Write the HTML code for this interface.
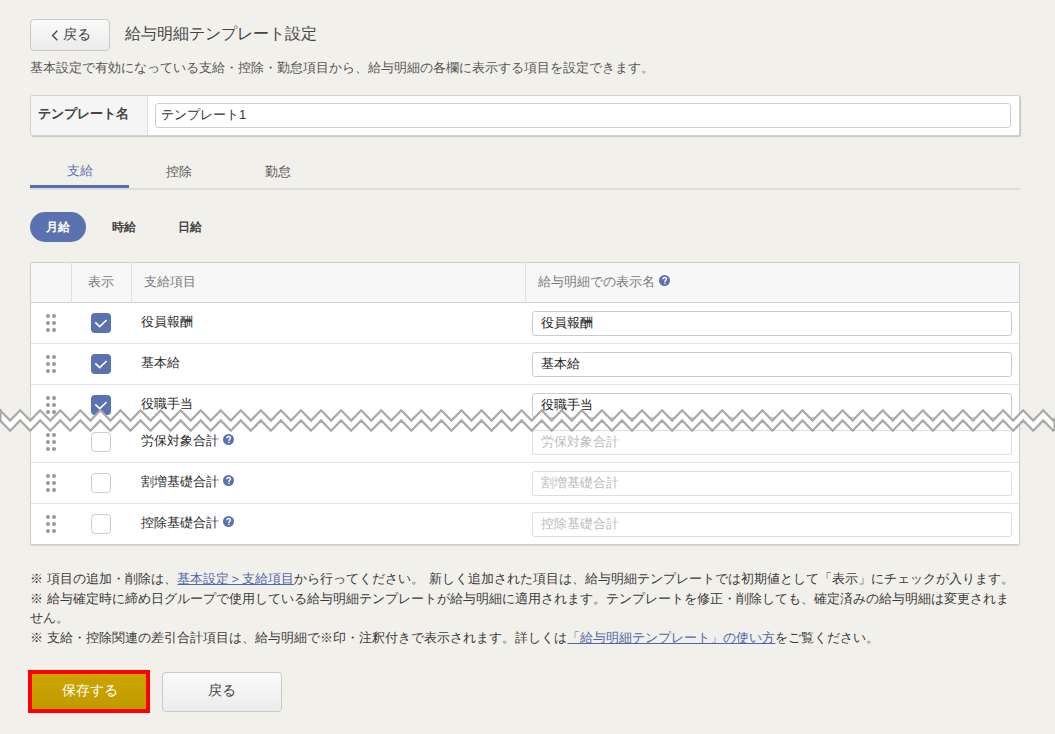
<!DOCTYPE html>
<html lang="ja">
<head>
<meta charset="utf-8">
<style>
*{box-sizing:border-box;margin:0;padding:0}
html,body{width:1055px;height:734px;overflow:hidden}
body{background:#f2f0eb;font-family:"Liberation Sans",sans-serif;color:#444;position:relative}
.a{position:absolute;white-space:nowrap}
.btn{position:absolute;border:1px solid #c9c9c9;border-radius:4px;background:linear-gradient(#fafafa,#ececec);color:#444;text-align:center}
.t13{font-size:13px;line-height:20px}
.tab{position:absolute;top:160px;width:99px;height:25px;text-align:center;font-size:13px;line-height:20px;color:#5a5a5a}
.pill{position:absolute;top:212px;width:56px;height:30px;border-radius:15px;text-align:center;font-size:12px;font-weight:bold;line-height:30px;color:#444}
.tbl{position:absolute;left:30px;top:262px;width:990px;height:283px;background:#fff;border:1px solid #cfcfcf;border-radius:2px;box-shadow:0 1px 1px rgba(0,0,0,.12);overflow:hidden}
.hdr{position:absolute;left:0;top:0;width:988px;height:40px;background:#f7f7f7;border-bottom:1px solid #d0d0d0}
.vl{position:absolute;top:0;width:1px;height:40px;background:#e0e0e0}
.hl{position:absolute;left:0;width:988px;height:1px;background:#e3e3e3}
.dots{position:absolute;left:15px;width:10px;height:18px}
.cb{position:absolute;left:60px;width:20px;height:20px;border-radius:4px}
.cb.on{background:#5a72b0}
.cb.off{background:#fff;border:1px solid #cdcdcd}
.itm{position:absolute;left:110px;font-size:13px;line-height:18px;color:#2a2a2a}
.inp{position:absolute;left:501px;width:480px;height:25px;border:1px solid #cbcbcb;border-radius:3px;background:#fff;font-size:13px;line-height:21px;padding-left:8px;color:#222}
.inp.ph{color:#bbb;border-color:#dedede}
.q{display:inline-block;width:11px;height:11px;vertical-align:0px;margin-left:4px}
.note{position:absolute;left:30px;font-size:13px;line-height:19.5px;color:#3a3a3a;white-space:nowrap;word-spacing:0.8px}
.lnk{color:#4d68a8;text-decoration:underline}
</style>
</head>
<body>

<!-- back button -->
<div class="btn" style="left:30px;top:19px;width:80px;height:32px;font-size:14px;line-height:30px">
  <svg width="8" height="12" viewBox="0 0 8 12" style="position:absolute;left:20px;top:10px"><path d="M6.3 0.8 L1.6 5.5 L6.3 10.2" fill="none" stroke="#444" stroke-width="1.35"/></svg>
  <span class="a" style="left:32px;top:-1px">戻る</span>
</div>
<div class="a" style="left:125px;top:24px;font-size:16px;line-height:20px;color:#444">給与明細テンプレート設定</div>
<div class="a t13" style="left:30px;top:58px;color:#555">基本設定で有効になっている支給・控除・勤怠項目から、給与明細の各欄に表示する項目を設定できます。</div>

<!-- template name box -->
<div class="a" style="left:30px;top:95px;width:990px;height:41px;background:#fff;border:1px solid #d2d2d2;border-radius:2px;overflow:hidden;box-shadow:1px 1px 1px rgba(0,0,0,.18)">
  <div class="a" style="left:0;top:0;width:117px;height:39px;background:#f5f5f5;border-right:1px solid #dedede"></div>
  <div class="a t13" style="left:7px;top:8px;font-weight:bold;color:#444">テンプレート名</div>
  <div class="a" style="left:124px;top:7px;width:856px;height:25px;border:1px solid #cdcdcd;border-radius:3px;background:#fff;font-size:13px;line-height:21px;padding-left:5px;color:#333">テンプレート1</div>
</div>

<!-- tabs -->
<div class="tab" style="left:30px;top:160.5px;color:#5a72b0">支給</div>
<div class="tab" style="left:129px;top:161.5px">控除</div>
<div class="tab" style="left:228px;top:161.5px">勤怠</div>
<div class="a" style="left:30px;top:188px;width:990px;height:2px;background:#dcdcdc"></div>
<div class="a" style="left:30px;top:185px;width:99px;height:3px;background:#5570ad"></div>

<!-- pills -->
<div class="pill" style="left:30px;background:#5a72b0;color:#fff">月給</div>
<div class="pill" style="left:96px">時給</div>
<div class="pill" style="left:162px">日給</div>

<!-- table -->
<div class="tbl">
  <div class="hdr">
    <div class="vl" style="left:40px"></div>
    <div class="vl" style="left:100px"></div>
    <div class="vl" style="left:494px"></div>
    <div class="a t13" style="left:57px;top:9px;color:#7a7a7a">表示</div>
    <div class="a t13" style="left:113px;top:9px;color:#7a7a7a">支給項目</div>
    <div class="a t13" style="left:507px;top:9px;color:#7a7a7a">給与明細での表示名<span class="q"><svg width="11" height="11" viewBox="0 0 11 11"><circle cx="5.5" cy="5.5" r="5.5" fill="#5a72b0"/><path d="M3.8 4.3 C3.8 3 4.6 2.5 5.6 2.5 C6.7 2.5 7.5 3.1 7.5 4 C7.5 5.1 6.1 5.3 5.9 6.3 L5.9 6.9" fill="none" stroke="#fff" stroke-width="1.3"/><rect x="5.2" y="7.8" width="1.4" height="1.2" fill="#fff"/></svg></span></div>
  </div>
    <svg class="dots" style="top:51px" width="10" height="18" viewBox="0 0 10 18"><g fill="#999"><circle cx="2" cy="2" r="2"/><circle cx="8" cy="2" r="2"/><circle cx="2" cy="9" r="2"/><circle cx="8" cy="9" r="2"/><circle cx="2" cy="16" r="2"/><circle cx="8" cy="16" r="2"/></g></svg>
  <div class="cb on" style="top:50px"><svg width="20" height="20" viewBox="0 0 20 20" style="position:absolute;left:0;top:0"><path d="M4.3 9.3 L8.7 13.5 L15.6 7" fill="none" stroke="#fff" stroke-width="1.7"/></svg></div>
  <div class="itm" style="top:50px">役員報酬</div>
  <div class="inp" style="top:48px">役員報酬</div>
  <div class="hl" style="top:80px"></div>
  <svg class="dots" style="top:92px" width="10" height="18" viewBox="0 0 10 18"><g fill="#999"><circle cx="2" cy="2" r="2"/><circle cx="8" cy="2" r="2"/><circle cx="2" cy="9" r="2"/><circle cx="8" cy="9" r="2"/><circle cx="2" cy="16" r="2"/><circle cx="8" cy="16" r="2"/></g></svg>
  <div class="cb on" style="top:91px"><svg width="20" height="20" viewBox="0 0 20 20" style="position:absolute;left:0;top:0"><path d="M4.3 9.3 L8.7 13.5 L15.6 7" fill="none" stroke="#fff" stroke-width="1.7"/></svg></div>
  <div class="itm" style="top:91px">基本給</div>
  <div class="inp" style="top:89px">基本給</div>
  <div class="hl" style="top:121px"></div>
  <svg class="dots" style="top:133px" width="10" height="18" viewBox="0 0 10 18"><g fill="#999"><circle cx="2" cy="2" r="2"/><circle cx="8" cy="2" r="2"/><circle cx="2" cy="9" r="2"/><circle cx="8" cy="9" r="2"/><circle cx="2" cy="16" r="2"/><circle cx="8" cy="16" r="2"/></g></svg>
  <div class="cb on" style="top:132px"><svg width="20" height="20" viewBox="0 0 20 20" style="position:absolute;left:0;top:0"><path d="M4.3 9.3 L8.7 13.5 L15.6 7" fill="none" stroke="#fff" stroke-width="1.7"/></svg></div>
  <div class="itm" style="top:132px">役職手当</div>
  <div class="inp" style="top:130px">役職手当</div>
  
  <svg class="dots" style="top:170px" width="10" height="18" viewBox="0 0 10 18"><g fill="#999"><circle cx="2" cy="2" r="2"/><circle cx="8" cy="2" r="2"/><circle cx="2" cy="9" r="2"/><circle cx="8" cy="9" r="2"/><circle cx="2" cy="16" r="2"/><circle cx="8" cy="16" r="2"/></g></svg>
  <div class="cb off" style="top:169px"></div>
  <div class="itm" style="top:169px">労保対象合計<span class="q"><svg width="11" height="11" viewBox="0 0 11 11"><circle cx="5.5" cy="5.5" r="5.5" fill="#5a72b0"/><path d="M3.8 4.3 C3.8 3 4.6 2.5 5.6 2.5 C6.7 2.5 7.5 3.1 7.5 4 C7.5 5.1 6.1 5.3 5.9 6.3 L5.9 6.9" fill="none" stroke="#fff" stroke-width="1.3"/><rect x="5.2" y="7.8" width="1.4" height="1.2" fill="#fff"/></svg></span></div>
  <div class="inp ph" style="top:167px">労保対象合計</div>
  <div class="hl" style="top:199px"></div>
  <svg class="dots" style="top:211px" width="10" height="18" viewBox="0 0 10 18"><g fill="#999"><circle cx="2" cy="2" r="2"/><circle cx="8" cy="2" r="2"/><circle cx="2" cy="9" r="2"/><circle cx="8" cy="9" r="2"/><circle cx="2" cy="16" r="2"/><circle cx="8" cy="16" r="2"/></g></svg>
  <div class="cb off" style="top:210px"></div>
  <div class="itm" style="top:210px">割増基礎合計<span class="q"><svg width="11" height="11" viewBox="0 0 11 11"><circle cx="5.5" cy="5.5" r="5.5" fill="#5a72b0"/><path d="M3.8 4.3 C3.8 3 4.6 2.5 5.6 2.5 C6.7 2.5 7.5 3.1 7.5 4 C7.5 5.1 6.1 5.3 5.9 6.3 L5.9 6.9" fill="none" stroke="#fff" stroke-width="1.3"/><rect x="5.2" y="7.8" width="1.4" height="1.2" fill="#fff"/></svg></span></div>
  <div class="inp ph" style="top:208px">割増基礎合計</div>
  <div class="hl" style="top:240px"></div>
  <svg class="dots" style="top:252px" width="10" height="18" viewBox="0 0 10 18"><g fill="#999"><circle cx="2" cy="2" r="2"/><circle cx="8" cy="2" r="2"/><circle cx="2" cy="9" r="2"/><circle cx="8" cy="9" r="2"/><circle cx="2" cy="16" r="2"/><circle cx="8" cy="16" r="2"/></g></svg>
  <div class="cb off" style="top:251px"></div>
  <div class="itm" style="top:251px">控除基礎合計<span class="q"><svg width="11" height="11" viewBox="0 0 11 11"><circle cx="5.5" cy="5.5" r="5.5" fill="#5a72b0"/><path d="M3.8 4.3 C3.8 3 4.6 2.5 5.6 2.5 C6.7 2.5 7.5 3.1 7.5 4 C7.5 5.1 6.1 5.3 5.9 6.3 L5.9 6.9" fill="none" stroke="#fff" stroke-width="1.3"/><rect x="5.2" y="7.8" width="1.4" height="1.2" fill="#fff"/></svg></span></div>
  <div class="inp ph" style="top:249px">控除基礎合計</div>
</div>

<!-- zigzag -->
<svg class="a" style="left:0;top:0" width="1055" height="734" viewBox="0 0 1055 734">
  <polygon points="-19.96,410.30 -9.93,420.50 0.10,410.30 10.13,420.50 20.16,410.30 30.19,420.50 40.22,410.30 50.25,420.50 60.28,410.30 70.31,420.50 80.34,410.30 90.37,420.50 100.40,410.30 110.43,420.50 120.46,410.30 130.49,420.50 140.52,410.30 150.55,420.50 160.58,410.30 170.61,420.50 180.64,410.30 190.67,420.50 200.70,410.30 210.73,420.50 220.76,410.30 230.79,420.50 240.82,410.30 250.85,420.50 260.88,410.30 270.91,420.50 280.94,410.30 290.97,420.50 301.00,410.30 311.03,420.50 321.06,410.30 331.09,420.50 341.12,410.30 351.15,420.50 361.18,410.30 371.21,420.50 381.24,410.30 391.27,420.50 401.30,410.30 411.33,420.50 421.36,410.30 431.39,420.50 441.42,410.30 451.45,420.50 461.48,410.30 471.51,420.50 481.54,410.30 491.57,420.50 501.60,410.30 511.63,420.50 521.66,410.30 531.69,420.50 541.72,410.30 551.75,420.50 561.78,410.30 571.81,420.50 581.84,410.30 591.87,420.50 601.90,410.30 611.93,420.50 621.96,410.30 631.99,420.50 642.02,410.30 652.05,420.50 662.08,410.30 672.11,420.50 682.14,410.30 692.17,420.50 702.20,410.30 712.23,420.50 722.26,410.30 732.29,420.50 742.32,410.30 752.35,420.50 762.38,410.30 772.41,420.50 782.44,410.30 792.47,420.50 802.50,410.30 812.53,420.50 822.56,410.30 832.59,420.50 842.62,410.30 852.65,420.50 862.68,410.30 872.71,420.50 882.74,410.30 892.77,420.50 902.80,410.30 912.83,420.50 922.86,410.30 932.89,420.50 942.92,410.30 952.95,420.50 962.98,410.30 973.01,420.50 983.04,410.30 993.07,420.50 1003.10,410.30 1013.13,420.50 1023.16,410.30 1033.19,420.50 1043.22,410.30 1053.25,420.50 1063.28,410.30 1073.31,420.50 1073.31,430.70 1063.28,420.50 1053.25,430.70 1043.22,420.50 1033.19,430.70 1023.16,420.50 1013.13,430.70 1003.10,420.50 993.07,430.70 983.04,420.50 973.01,430.70 962.98,420.50 952.95,430.70 942.92,420.50 932.89,430.70 922.86,420.50 912.83,430.70 902.80,420.50 892.77,430.70 882.74,420.50 872.71,430.70 862.68,420.50 852.65,430.70 842.62,420.50 832.59,430.70 822.56,420.50 812.53,430.70 802.50,420.50 792.47,430.70 782.44,420.50 772.41,430.70 762.38,420.50 752.35,430.70 742.32,420.50 732.29,430.70 722.26,420.50 712.23,430.70 702.20,420.50 692.17,430.70 682.14,420.50 672.11,430.70 662.08,420.50 652.05,430.70 642.02,420.50 631.99,430.70 621.96,420.50 611.93,430.70 601.90,420.50 591.87,430.70 581.84,420.50 571.81,430.70 561.78,420.50 551.75,430.70 541.72,420.50 531.69,430.70 521.66,420.50 511.63,430.70 501.60,420.50 491.57,430.70 481.54,420.50 471.51,430.70 461.48,420.50 451.45,430.70 441.42,420.50 431.39,430.70 421.36,420.50 411.33,430.70 401.30,420.50 391.27,430.70 381.24,420.50 371.21,430.70 361.18,420.50 351.15,430.70 341.12,420.50 331.09,430.70 321.06,420.50 311.03,430.70 301.00,420.50 290.97,430.70 280.94,420.50 270.91,430.70 260.88,420.50 250.85,430.70 240.82,420.50 230.79,430.70 220.76,420.50 210.73,430.70 200.70,420.50 190.67,430.70 180.64,420.50 170.61,430.70 160.58,420.50 150.55,430.70 140.52,420.50 130.49,430.70 120.46,420.50 110.43,430.70 100.40,420.50 90.37,430.70 80.34,420.50 70.31,430.70 60.28,420.50 50.25,430.70 40.22,420.50 30.19,430.70 20.16,420.50 10.13,430.70 0.10,420.50 -9.93,430.70 -19.96,420.50" fill="#fff"/>
  <polyline points="-19.96,410.30 -9.93,420.50 0.10,410.30 10.13,420.50 20.16,410.30 30.19,420.50 40.22,410.30 50.25,420.50 60.28,410.30 70.31,420.50 80.34,410.30 90.37,420.50 100.40,410.30 110.43,420.50 120.46,410.30 130.49,420.50 140.52,410.30 150.55,420.50 160.58,410.30 170.61,420.50 180.64,410.30 190.67,420.50 200.70,410.30 210.73,420.50 220.76,410.30 230.79,420.50 240.82,410.30 250.85,420.50 260.88,410.30 270.91,420.50 280.94,410.30 290.97,420.50 301.00,410.30 311.03,420.50 321.06,410.30 331.09,420.50 341.12,410.30 351.15,420.50 361.18,410.30 371.21,420.50 381.24,410.30 391.27,420.50 401.30,410.30 411.33,420.50 421.36,410.30 431.39,420.50 441.42,410.30 451.45,420.50 461.48,410.30 471.51,420.50 481.54,410.30 491.57,420.50 501.60,410.30 511.63,420.50 521.66,410.30 531.69,420.50 541.72,410.30 551.75,420.50 561.78,410.30 571.81,420.50 581.84,410.30 591.87,420.50 601.90,410.30 611.93,420.50 621.96,410.30 631.99,420.50 642.02,410.30 652.05,420.50 662.08,410.30 672.11,420.50 682.14,410.30 692.17,420.50 702.20,410.30 712.23,420.50 722.26,410.30 732.29,420.50 742.32,410.30 752.35,420.50 762.38,410.30 772.41,420.50 782.44,410.30 792.47,420.50 802.50,410.30 812.53,420.50 822.56,410.30 832.59,420.50 842.62,410.30 852.65,420.50 862.68,410.30 872.71,420.50 882.74,410.30 892.77,420.50 902.80,410.30 912.83,420.50 922.86,410.30 932.89,420.50 942.92,410.30 952.95,420.50 962.98,410.30 973.01,420.50 983.04,410.30 993.07,420.50 1003.10,410.30 1013.13,420.50 1023.16,410.30 1033.19,420.50 1043.22,410.30 1053.25,420.50 1063.28,410.30 1073.31,420.50" fill="none" stroke="#a9a9a9" stroke-width="2.3" stroke-linejoin="miter"/>
  <polyline points="-19.96,420.50 -9.93,430.70 0.10,420.50 10.13,430.70 20.16,420.50 30.19,430.70 40.22,420.50 50.25,430.70 60.28,420.50 70.31,430.70 80.34,420.50 90.37,430.70 100.40,420.50 110.43,430.70 120.46,420.50 130.49,430.70 140.52,420.50 150.55,430.70 160.58,420.50 170.61,430.70 180.64,420.50 190.67,430.70 200.70,420.50 210.73,430.70 220.76,420.50 230.79,430.70 240.82,420.50 250.85,430.70 260.88,420.50 270.91,430.70 280.94,420.50 290.97,430.70 301.00,420.50 311.03,430.70 321.06,420.50 331.09,430.70 341.12,420.50 351.15,430.70 361.18,420.50 371.21,430.70 381.24,420.50 391.27,430.70 401.30,420.50 411.33,430.70 421.36,420.50 431.39,430.70 441.42,420.50 451.45,430.70 461.48,420.50 471.51,430.70 481.54,420.50 491.57,430.70 501.60,420.50 511.63,430.70 521.66,420.50 531.69,430.70 541.72,420.50 551.75,430.70 561.78,420.50 571.81,430.70 581.84,420.50 591.87,430.70 601.90,420.50 611.93,430.70 621.96,420.50 631.99,430.70 642.02,420.50 652.05,430.70 662.08,420.50 672.11,430.70 682.14,420.50 692.17,430.70 702.20,420.50 712.23,430.70 722.26,420.50 732.29,430.70 742.32,420.50 752.35,430.70 762.38,420.50 772.41,430.70 782.44,420.50 792.47,430.70 802.50,420.50 812.53,430.70 822.56,420.50 832.59,430.70 842.62,420.50 852.65,430.70 862.68,420.50 872.71,430.70 882.74,420.50 892.77,430.70 902.80,420.50 912.83,430.70 922.86,420.50 932.89,430.70 942.92,420.50 952.95,430.70 962.98,420.50 973.01,430.70 983.04,420.50 993.07,430.70 1003.10,420.50 1013.13,430.70 1023.16,420.50 1033.19,430.70 1043.22,420.50 1053.25,430.70 1063.28,420.50 1073.31,430.70" fill="none" stroke="#a9a9a9" stroke-width="2.3" stroke-linejoin="miter"/>
  <line x1="0.8" y1="409" x2="0.8" y2="421" stroke="#a9a9a9" stroke-width="1.6"/>
  <line x1="1054.3" y1="419" x2="1054.3" y2="431" stroke="#a9a9a9" stroke-width="1.6"/>
</svg>

<!-- notes -->
<div class="note" style="top:569px">※ 項目の追加・削除は、<span class="lnk">基本設定＞支給項目</span>から行ってください。 新しく追加された項目は、給与明細テンプレートでは初期値として「表示」にチェックが入ります。</div>
<div class="note" style="top:588.5px">※ 給与確定時に締め日グループで使用している給与明細テンプレートが給与明細に適用されます。テンプレートを修正・削除しても、確定済みの給与明細は変更されま</div>
<div class="note" style="top:608px">せん。</div>
<div class="note" style="top:627.5px">※ 支給・控除関連の差引合計項目は、給与明細で※印・注釈付きで表示されます。詳しくは<span class="lnk">「給与明細テンプレート」の使い方</span>をご覧ください。</div>

<!-- buttons -->
<div class="a" style="left:30px;top:672px;width:120px;height:40px;border-radius:3px;background:linear-gradient(#cba600,#bf9a00);color:#fff;font-size:14px;line-height:36px;text-align:center">保存する</div>
<div class="a" style="left:28px;top:670px;width:122px;height:43px;border:4px solid #ff0000"></div>
<div class="btn" style="left:162px;top:672px;width:120px;height:40px;font-size:14px;line-height:34px">戻る</div>

</body>
</html>
